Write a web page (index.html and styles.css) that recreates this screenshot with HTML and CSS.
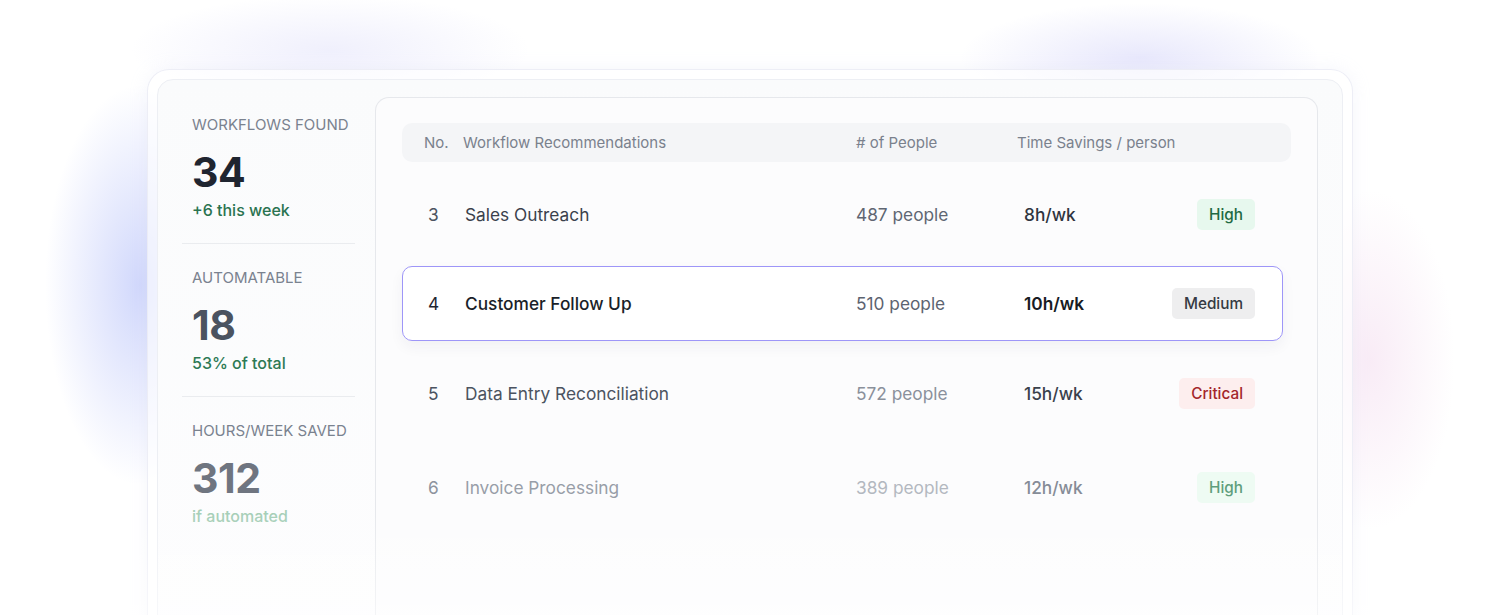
FILE: index.html
```html
<!DOCTYPE html>
<html lang="en">
<head>
<meta charset="utf-8">
<title>Workflow Recommendations</title>
<link rel="stylesheet" href="styles.css">
</head>
<body>
<div class="stage">
  <div class="frame">
    <div class="card">
      <aside class="stats">
        <section class="stat">
          <div class="stat-label">Workflows Found</div>
          <div class="stat-value v1">34</div>
          <div class="stat-sub s1">+6 this week</div>
        </section>
        <section class="stat">
          <div class="stat-label">Automatable</div>
          <div class="stat-value v2">18</div>
          <div class="stat-sub s2">53% of total</div>
        </section>
        <section class="stat last">
          <div class="stat-label">Hours/Week Saved</div>
          <div class="stat-value v3">312</div>
          <div class="stat-sub s3">if automated</div>
        </section>
      </aside>
      <main class="table-card">
        <div class="thead">
          <div class="c-no">No.</div>
          <div class="c-name">Workflow Recommendations</div>
          <div class="c-people">#&nbsp;of People</div>
          <div class="c-time">Time Savings / person</div>
        </div>
        <div class="row r3">
          <div class="c-no">3</div>
          <div class="c-name">Sales Outreach</div>
          <div class="c-people">487 people</div>
          <div class="c-time">8h/wk</div>
          <div class="c-badge"><span class="badge high">High</span></div>
        </div>
        <div class="row r4 selected">
          <div class="c-no">4</div>
          <div class="c-name">Customer Follow Up</div>
          <div class="c-people">510 people</div>
          <div class="c-time">10h/wk</div>
          <div class="c-badge"><span class="badge medium">Medium</span></div>
        </div>
        <div class="row r5">
          <div class="c-no">5</div>
          <div class="c-name">Data Entry Reconciliation</div>
          <div class="c-people">572 people</div>
          <div class="c-time">15h/wk</div>
          <div class="c-badge"><span class="badge critical">Critical</span></div>
        </div>
        <div class="row r6">
          <div class="c-no">6</div>
          <div class="c-name">Invoice Processing</div>
          <div class="c-people">389 people</div>
          <div class="c-time">12h/wk</div>
          <div class="c-badge"><span class="badge high faded">High</span></div>
        </div>
      </main>
    </div>
  </div>
  <div class="fade"></div>
</div>
</body>
</html>
```

FILE: styles.css
```css
* { box-sizing: border-box; }
html, body { margin: 0; padding: 0; }
body {
  width: 1500px;
  height: 615px;
  overflow: hidden;
  font-family: Inter, "Noto Sans", "Liberation Sans", sans-serif;
  background:
    radial-gradient(ellipse 95px 200px at 140px 285px, rgba(120, 140, 245, 0.34), rgba(120, 140, 245, 0) 100%),
    radial-gradient(ellipse 200px 55px at 330px 50px, rgba(160, 160, 240, 0.16), rgba(160, 160, 240, 0) 100%),
    radial-gradient(ellipse 180px 55px at 1140px 58px, rgba(150, 150, 240, 0.22), rgba(150, 150, 240, 0) 100%),
    radial-gradient(ellipse 85px 170px at 1370px 360px, rgba(230, 180, 220, 0.26), rgba(230, 180, 220, 0) 100%),
    #ffffff;
}
.stage {
  position: relative;
  height: 615px;
  padding: 69px 0 0 147px;
}
.frame {
  width: 1206px;
  height: 600px;
  padding: 9px;
  border: 1px solid rgba(232, 234, 244, 0.8);
  border-radius: 22px;
  background: rgba(255, 255, 255, 0.6);
  box-shadow: 0 0 18px rgba(200, 205, 240, 0.18);
}
.card {
  display: flex;
  height: 100%;
  border: 1px solid #edeff4;
  border-radius: 16px;
  background: linear-gradient(180deg, #fafbfc 0%, #fdfdfe 100%);
}
.stats {
  width: 217px;
  flex: none;
  padding: 11px 20px 0 24px;
}
.stat {
  padding: 24px 0 22px 10px;
  border-bottom: 1px solid #eaecef;
}
.stat.last { border-bottom: none; }
.stat-label {
  font-size: 15px;
  line-height: 20px;
  color: #7a828f;
  text-transform: uppercase;
}
.stat-value {
  margin-top: 15px;
  font-size: 41px;
  line-height: 44px;
  font-weight: 700;
  letter-spacing: -0.5px;
}
.v1 { color: #1f2530; }
.v2 { color: #4b5360; }
.v3 { color: #6f7580; }
.stat-sub {
  margin-top: 5px;
  font-size: 16px;
  line-height: 22px;
  font-weight: 500;
}
.s1 { color: #2a7350; }
.s2 { color: #2d7a55; }
.s3 { color: #a3cdb5; }

.table-card {
  flex: 1;
  margin: 17px 24px 0 0;
  padding: 25px 26px 0 26px;
  border: 1px solid #e6e8ec;
  border-bottom: none;
  border-radius: 14px 14px 0 0;
  background: #fcfcfd;
}
.thead {
  display: flex;
  align-items: center;
  height: 39px;
  padding-left: 22px;
  border-radius: 10px;
  background: #f4f5f7;
  font-size: 15px;
  color: #7a818d;
}
.thead .c-no { width: 39px; }
.thead .c-name { width: 393px; }
.thead .c-people { width: 161px; }
.row {
  display: flex;
  align-items: center;
  width: 881px;
  height: 75px;
  margin-top: 14.5px;
  padding: 0 27px 0 25px;
  border: 1.5px solid transparent;
  border-radius: 10px;
  font-size: 17.3px;
}
.row .c-no { width: 37px; }
.row .c-name { width: 391px; }
.row .c-people { width: 168px; }
.row .c-time { width: 110px; font-weight: 500; }
.row .c-badge { flex: 1; display: flex; justify-content: flex-end; }
.row.r6 { margin-top: 19px; }
.selected {
  border-color: #9e96f8;
  background: #ffffff;
  box-shadow: 0 6px 14px rgba(30, 30, 80, 0.05);
}
.r3 .c-no { color: #4b5360; }
.r3 .c-name { color: #3a414c; }
.r3 .c-people { color: #5f6672; }
.r3 .c-time { color: #2f3540; }
.r4 .c-no { color: #1f2530; }
.r4 .c-name { color: #1a1f29; font-weight: 500; }
.r4 .c-people { color: #5c6370; }
.r4 .c-time { color: #171b23; font-weight: 600; }
.r5 .c-no { color: #4b5360; }
.r5 .c-name { color: #4b5360; }
.r5 .c-people { color: #8a909b; }
.r5 .c-time { color: #3a414c; }
.r6 .c-no { color: #8d939d; }
.r6 .c-name { color: #989ea8; }
.r6 .c-people { color: #b3b8c0; }
.r6 .c-time { color: #868c97; }
.badge {
  display: inline-flex;
  align-items: center;
  height: 31px;
  padding: 0 12px;
  border-radius: 5px;
  font-size: 15.3px;
  font-weight: 500;
}
.badge.high { background: #e7f8ee; color: #1f6a43; }
.badge.high.faded { background: #eefbf3; color: #5f9e7c; }
.badge.medium { background: #eeeeef; color: #353a43; }
.badge.critical { background: #fdeeee; color: #a3262b; }
.fade {
  position: absolute;
  left: 0;
  right: 0;
  bottom: 0;
  height: 110px;
  pointer-events: none;
  background: linear-gradient(180deg, rgba(255, 255, 255, 0) 0%, rgba(255, 255, 255, 0.55) 100%);
}
```
